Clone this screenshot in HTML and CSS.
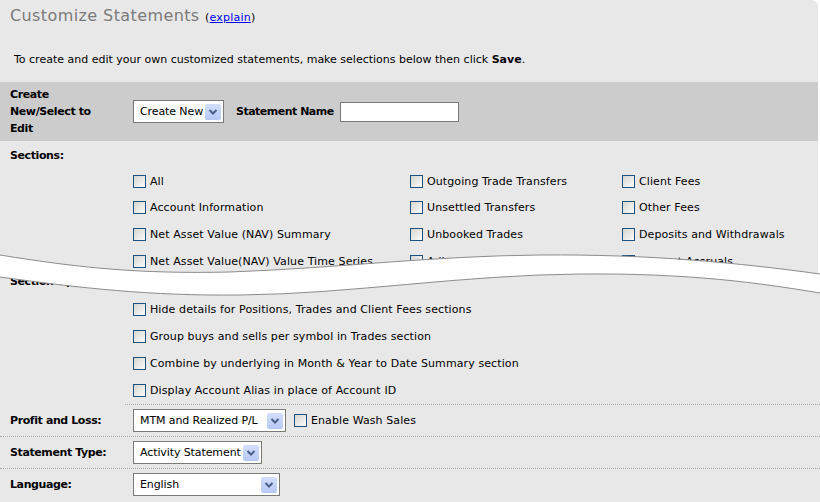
FILE: index.html
```html
<!DOCTYPE html>
<html lang="en">
<head>
    <meta charset="UTF-8">
    <title>Customize Statements</title>
    <link rel="stylesheet" href="styles.css">
</head>
<body>
<div class="page">
    <div class="panel top">
        <h1 class="title">Customize Statements <span class="explain">(<a href="#">explain</a>)</span></h1>
        <p class="intro">To create and edit your own customized statements, make selections below then click <b>Save</b>.</p>

        <div class="band">
            <div class="label">Create<br>New/Select to<br>Edit</div>
            <div class="controls">
                <div class="select w-new"><span class="value">Create New</span><span class="arrow"><svg width="10" height="8" viewBox="0 0 10 8"><polyline points="1.5,2 5,5.5 8.5,2" fill="none" stroke="#4a5f8c" stroke-width="2"/></svg></span></div>
                <span class="name-label">Statement Name</span>
                <input type="text" class="name-box">
            </div>
        </div>

        <div class="section-head">Sections:</div>
        <div class="checks">
            <label class="check"><input type="checkbox"> All</label>
            <label class="check"><input type="checkbox"> Account Information</label>
            <label class="check"><input type="checkbox"> Net Asset Value (NAV) Summary</label>
            <label class="check"><input type="checkbox"> Net Asset Value(NAV) Value Time Series</label>
            <label class="check"><input type="checkbox"> Outgoing Trade Transfers</label>
            <label class="check"><input type="checkbox"> Unsettled Transfers</label>
            <label class="check"><input type="checkbox"> Unbooked Trades</label>
            <label class="check"><input type="checkbox"> Adjustments</label>
            <label class="check"><input type="checkbox"> Client Fees</label>
            <label class="check"><input type="checkbox"> Other Fees</label>
            <label class="check"><input type="checkbox"> Deposits and Withdrawals</label>
            <label class="check"><input type="checkbox"> Interest Accruals</label>
        </div>
    </div>

    <div class="panel lower">
        <div class="section-head options-head">Section Options:</div>
        <div class="options">
            <label class="check"><input type="checkbox"> Hide details for Positions, Trades and Client Fees sections</label>
            <label class="check"><input type="checkbox"> Group buys and sells per symbol in Trades section</label>
            <label class="check"><input type="checkbox"> Combine by underlying in Month &amp; Year to Date Summary section</label>
            <label class="check"><input type="checkbox"> Display Account Alias in place of Account ID</label>
        </div>

        <div class="field-row">
            <div class="label">Profit and Loss:</div>
            <div class="controls">
                <div class="select w-pl"><span class="value">MTM and Realized P/L</span><span class="arrow"><svg width="10" height="8" viewBox="0 0 10 8"><polyline points="1.5,2 5,5.5 8.5,2" fill="none" stroke="#4a5f8c" stroke-width="2"/></svg></span></div>
                <label class="check wash"><input type="checkbox"> Enable Wash Sales</label>
            </div>
        </div>
        <div class="field-row">
            <div class="label">Statement Type:</div>
            <div class="controls">
                <div class="select w-type"><span class="value">Activity Statement</span><span class="arrow"><svg width="10" height="8" viewBox="0 0 10 8"><polyline points="1.5,2 5,5.5 8.5,2" fill="none" stroke="#4a5f8c" stroke-width="2"/></svg></span></div>
            </div>
        </div>
        <div class="field-row last">
            <div class="label">Language:</div>
            <div class="controls">
                <div class="select w-lang"><span class="value">English</span><span class="arrow"><svg width="10" height="8" viewBox="0 0 10 8"><polyline points="1.5,2 5,5.5 8.5,2" fill="none" stroke="#4a5f8c" stroke-width="2"/></svg></span></div>
            </div>
        </div>
    </div>

    <!-- torn-page break drawn over the cut between the two parts -->
    <svg class="tear" width="820" height="60" viewBox="0 250 820 60">
        <path d="M0,255 C80,268 140,274 230,272 C340,268 430,256 540,255 C650,254 740,263 820,274 L820,293 C760,283 690,273 580,274 C460,275 350,294 240,295 C150,296 80,288 0,277 Z" fill="#fff"/>
        <path d="M0,255 C80,268 140,274 230,272 C340,268 430,256 540,255 C650,254 740,263 820,274" fill="none" stroke="#8c8c8c" stroke-width="1"/>
        <path d="M0,277 C80,288 150,296 240,295 C350,294 460,275 580,274 C690,273 760,283 820,293" fill="none" stroke="#8c8c8c" stroke-width="1"/>
    </svg>
</div>
</body>
</html>
```

FILE: styles.css
```css
body {
    margin: 0;
    background: #fff;
    font-family: "DejaVu Sans", Verdana, sans-serif;
    font-size: 11px;
    color: #000;
}

.page {
    position: relative;
    width: 820px;
    height: 502px;
    overflow: hidden;
}

.panel {
    background: #e9e8e9;
}

.top {
    width: 818px;
    height: 275px;
    overflow: hidden;
    border-top-right-radius: 6px;
}

.lower {
    width: 820px;
    height: 227px;
    overflow: hidden;
}

.title {
    margin: 0;
    padding: 6px 10px 0;
    height: 20px;
    font-size: 16px;
    font-weight: normal;
    line-height: 20px;
    letter-spacing: 0.4px;
    color: #7a7a7a;
}

.explain {
    font-size: 11px;
    line-height: 1;
    letter-spacing: 0.2px;
    color: #000;
}

.explain a {
    color: #0000ee;
}

.intro {
    margin: 27px 0 15px;
    padding-left: 14px;
    line-height: 14px;
}

.band {
    display: grid;
    grid-template-columns: 133px 1fr;
    align-items: center;
    height: 59px;
    background: #cccccc;
}

.label {
    padding-left: 10px;
    font-weight: bold;
    line-height: 17px;
    letter-spacing: -0.4px;
}

.controls {
    display: flex;
    align-items: center;
}

.select {
    display: flex;
    align-items: center;
    box-sizing: border-box;
    height: 23px;
    padding: 0 2px 0 6px;
    background: #fff;
    border: 1px solid #7a7a7a;
    white-space: nowrap;
    letter-spacing: -0.1px;
}

.select .value {
    flex: 1;
}

.arrow {
    display: flex;
    flex-shrink: 0;
    align-items: center;
    justify-content: center;
    width: 16px;
    height: 16px;
    margin-left: 1px;
    background: linear-gradient(#d2defc, #b6c8f5);
    border-radius: 2px;
}

.w-new { width: 91px; }
.w-pl { width: 153px; }
.w-type { width: 129px; }
.w-lang { width: 147px; }

.name-label {
    margin-left: 12px;
    font-weight: bold;
    letter-spacing: -0.5px;
}

.name-box {
    box-sizing: border-box;
    width: 119px;
    height: 20px;
    margin: 0 0 0 6px;
    border: 1px solid #7a7a7a;
    background: #fff;
}

.section-head {
    padding: 8px 0 0 10px;
    font-weight: bold;
    line-height: 14px;
    letter-spacing: -0.4px;
}

.checks {
    display: grid;
    grid-template-columns: 277px 212px 1fr;
    grid-template-rows: repeat(4, 26.67px);
    grid-auto-flow: column;
    margin: 5px 0 0 133px;
}

.check {
    display: flex;
    align-items: center;
    height: 26.67px;
    white-space: nowrap;
    letter-spacing: 0.1px;
}

.check input {
    appearance: none;
    width: 13px;
    height: 13px;
    margin: 0 4px 0 0;
    border: 1px solid #1c5180;
    background: linear-gradient(135deg, #d6d6d0, #fbfbfb);
}

.options-head {
    padding-top: 0;
}

.options {
    margin: 7px 0 0 125px;
    padding-left: 8px;
    border-bottom: 1px dotted #a8a8a8;
}

.options .check {
    height: 27px;
}

.field-row {
    display: grid;
    grid-template-columns: 133px 1fr;
    align-items: center;
    padding: 4px 0;
    border-bottom: 1px dotted #a8a8a8;
}

.field-row.last {
    border-bottom: none;
}

.wash {
    margin-left: 8px;
    height: auto;
}

.tear {
    position: absolute;
    left: 0;
    top: 250px;
}
```
